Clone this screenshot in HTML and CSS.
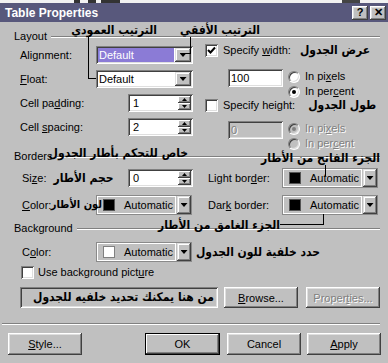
FILE: index.html
```html
<!DOCTYPE html>
<html>
<head>
<meta charset="utf-8">
<title>Table Properties</title>
<link rel="stylesheet" href="styles.css">
</head>
<body>
<div class="win">
  <div class="topstrip"></div>
  <div class="titlebar">
    <span class="title">Table Properties</span>
    <div class="tbtns"><span class="tbtn">?</span><span class="tbtn">✕</span></div>
  </div>

  <div class="ghead g-layout"><span>Layout</span><span class="etch"></span></div>
  <div class="layout">
    <div class="lcol">
      <div class="row"><span class="lbl w76">Alignment:</span>
        <div class="select focus"><span class="val">Default</span><span class="dd"><i class="tri"></i></span></div></div>
      <div class="row"><span class="lbl w76"><u>F</u>loat:</span>
        <div class="select"><span class="val">Default</span><span class="dd"><i class="tri"></i></span></div></div>
      <div class="row"><span class="lbl w108">Cell pa<u>d</u>ding:</span>
        <div class="spin"><span class="val">1</span><span class="sbtns"><span class="sb"><i class="up"></i></span><span class="sb"><i class="down"></i></span></span></div></div>
      <div class="row"><span class="lbl w108">Cell <u>s</u>pacing:</span>
        <div class="spin"><span class="val">2</span><span class="sbtns"><span class="sb"><i class="up"></i></span><span class="sb"><i class="down"></i></span></span></div></div>
    </div>
    <div class="rcol">
      <div class="chkrow"><span class="chk"><svg width="9" height="9" viewBox="0 0 9 9"><path d="M1 4 L3.5 6.5 L8 1.5" fill="none" stroke="#000" stroke-width="2"/></svg></span><span>Specify <u>w</u>idth:</span><span class="ar sw" dir="rtl">عرض الجدول</span></div>
      <div class="optrow r2">
        <div class="field">100</div>
        <div class="radios">
          <div class="radio-row"><span class="radio"></span><span>In pi<u>x</u>els</span></div>
          <div class="radio-row"><span class="radio on"></span><span>In per<u>c</u>ent</span></div>
        </div>
      </div>
      <div class="chkrow"><span class="chk"></span><span>Specify height:</span><span class="ar sh" dir="rtl">طول الجدول</span></div>
      <div class="optrow r4">
        <div class="field dis">0</div>
        <div class="radios dis">
          <div class="radio-row"><span class="radio on"></span><span class="dtext">In pi<u>x</u>els</span></div>
          <div class="radio-row"><span class="radio"></span><span class="dtext">In per<u>c</u>ent</span></div>
        </div>
      </div>
    </div>
  </div>

  <div class="ghead"><span>Borders</span><span class="etch"></span></div>
  <div class="borders">
    <div class="bl">
      <div class="row r20"><span class="lbl w106">Si<u>z</u>e: <span class="ar sz" dir="rtl">حجم الأطار</span></span>
        <div class="spin"><span class="val">0</span><span class="sbtns"><span class="sb"><i class="up"></i></span><span class="sb"><i class="down"></i></span></span></div></div>
      <div class="row r20"><span class="lbl w74"><u>C</u>olor:</span>
        <div class="cpick"><span class="cmain"><span class="swatch"></span>Automatic</span><span class="cdd"><i class="tri"></i></span></div></div>
    </div>
    <div class="br">
      <div class="row r20"><span class="lbl w74">Light bor<u>d</u>er:</span>
        <div class="cpick"><span class="cmain"><span class="swatch"></span>Automatic</span><span class="cdd"><i class="tri"></i></span></div></div>
      <div class="row r20"><span class="lbl w74">Dar<u>k</u> border:</span>
        <div class="cpick"><span class="cmain"><span class="swatch"></span>Automatic</span><span class="cdd"><i class="tri"></i></span></div></div>
    </div>
  </div>

  <div class="ghead g-bg"><span>Background</span><span class="etch"></span></div>
  <div class="row r20 bgrow"><span class="lbl w74">C<u>o</u>lor:</span>
    <div class="cpick"><span class="cmain"><span class="swatch white"></span>Automatic</span><span class="cdd"><i class="tri"></i></span></div>
    <span class="ar bgc" dir="rtl">حدد خلفية للون الجدول</span></div>
  <div class="chkrow usebg"><span class="chk"></span><span>Use background pict<u>u</u>re</span></div>
  <div class="inrow">
    <div class="field wide"><span class="ar" dir="rtl">من هنا يمكنك تحديد خلفيه للجدول</span></div>
    <span class="btn browse"><u>B</u>rowse...</span>
    <span class="btn props dtext">Proper<u>t</u>ies...</span>
  </div>

  <div class="sep"></div>
  <div class="btnrow">
    <span class="btn"><u>S</u>tyle...</span>
    <span class="btn ok">OK</span>
    <span class="btn cancel">Cancel</span>
    <span class="btn apply"><u>A</u>pply</span>
  </div>

  <span class="ar abs a1" dir="rtl">الترتيب العمودي</span>
  <span class="ar abs a2" dir="rtl">الترتيب الأفقي</span>
  <span class="ar abs a5" dir="rtl">خاص للتحكم بأطار الجدول</span>
  <span class="ar abs a6" dir="rtl">الجزء الفاتح من الأطار</span>
  <span class="ar abs a8" dir="rtl">لون الأطار</span>
  <span class="ar abs a9" dir="rtl">الجزء الغامق من الأطار</span>
  <span class="ln l1"></span>
  <span class="ln l2"></span>
  <span class="ln l3"></span>
  <span class="ln l4"></span>
</div>
</body>
</html>
```

FILE: styles.css
```css
* { box-sizing: border-box; }
html, body { margin: 0; padding: 0; }
body {
  background: #c0c0c0;
  font: 11px "Liberation Sans", Arial, sans-serif;
  color: #000;
}
.win {
  position: relative;
  width: 388px;
  height: 363px;
  background: #c0c0c0;
  overflow: hidden;
}
.topstrip {
  height: 3px;
  background: linear-gradient(90deg, #f2f2f2 0 74px, #333 74px 80px, #f2f2f2 80px 88px, #333 88px 96px, #f2f2f2 96px 101px, #333 101px 120px, #f2f2f2 120px 342px, #444 342px 360px, #f2f2f2 360px);
}
.titlebar {
  height: 19px;
  background: #58587c;
  display: flex;
  align-items: center;
  justify-content: space-between;
  padding: 0 2px 0 5px;
}
.title { color: #fff; font-weight: bold; font-size: 12px; }
.tbtns { display: flex; gap: 2px; }
.tbtn {
  width: 16px; height: 14px;
  background: #c0c0c0;
  box-shadow: inset -1px -1px #404040, inset 1px 1px #fff, inset -2px -2px #808080, inset 2px 2px #dfdfdf;
  font: bold 11px "Liberation Sans", Arial, sans-serif;
  display: flex; align-items: center; justify-content: center;
  line-height: 1;
  padding-bottom: 1px;
}

/* group headers */
.ghead {
  display: flex;
  align-items: center;
  height: 13px;
  padding: 0 8px 0 14px;
  line-height: 13px;
}
.g-layout { margin-top: 8px; }
.etch {
  flex: 1;
  height: 2px;
  border-top: 1px solid #808080;
  border-bottom: 1px solid #fff;
  margin-left: 4px;
}

.row { display: flex; align-items: center; height: 18px; }
.r20 { height: 20px; }
.lbl { line-height: 18px; white-space: nowrap; flex: none; }
.w74 { width: 74px; }
.w76 { width: 76px; }
.w106 { width: 106px; }
.w108 { width: 108px; }

/* layout section */
.layout { display: flex; height: 107px; }
.lcol {
  display: flex; flex-direction: column; gap: 6px;
  padding: 3px 0 0 20px;
  width: 205px;
}
.rcol { display: flex; flex-direction: column; padding-top: 1px; }

.select {
  width: 97px; height: 18px;
  background: #fff;
  padding: 2px;
  display: flex;
  box-shadow: inset 1px 1px #808080, inset -1px -1px #fff, inset 2px 2px #404040, inset -2px -2px #dfdfdf;
}
.select .val { flex: 1; line-height: 14px; padding-left: 1px; margin-right: 1px; }
.select.focus .val { background: #8b7bd6; color: #fff; }
.dd, .cdd {
  width: 16px;
  background: #c0c0c0;
  box-shadow: inset -1px -1px #404040, inset 1px 1px #dfdfdf, inset -2px -2px #808080, inset 2px 2px #fff;
  display: flex; align-items: center; justify-content: center;
}
.tri {
  display: block;
  width: 7px; height: 4px;
  background: #000;
  clip-path: polygon(0 0, 100% 0, 50% 100%);
}

.spin {
  width: 65px; height: 18px;
  background: #fff;
  padding: 2px;
  display: flex;
  box-shadow: inset 1px 1px #808080, inset -1px -1px #fff, inset 2px 2px #404040, inset -2px -2px #dfdfdf;
}
.spin .val { flex: 1; line-height: 14px; padding-left: 3px; }
.sbtns { width: 13px; display: flex; flex-direction: column; }
.sb {
  flex: 1;
  background: #c0c0c0;
  box-shadow: inset -1px -1px #404040, inset 1px 1px #fff, inset -2px -2px #808080;
  display: flex; align-items: center; justify-content: center;
}
.up, .down { display: block; width: 5px; height: 3px; background: #000; }
.up { clip-path: polygon(50% 0, 100% 100%, 0 100%); }
.down { clip-path: polygon(0 0, 100% 0, 50% 100%); }

.chkrow { display: flex; align-items: center; height: 13px; gap: 5px; line-height: 13px; white-space: nowrap; }
.chk {
  width: 13px; height: 13px; flex: none;
  background: #fff;
  box-shadow: inset 1px 1px #808080, inset -1px -1px #fff, inset 2px 2px #404040, inset -2px -2px #dfdfdf;
  display: flex; align-items: center; justify-content: center;
}
.optrow { display: flex; margin-left: 23px; }
.r2 { margin-top: 12px; height: 30px; }
.r4 { margin-top: 9px; height: 30px; }
.field {
  width: 55px; height: 18px;
  background: #fff;
  padding: 2px 3px;
  line-height: 14px;
  box-shadow: inset 1px 1px #808080, inset -1px -1px #fff, inset 2px 2px #404040, inset -2px -2px #dfdfdf;
}
.field.dis { background: #c0c0c0; color: #808080; text-shadow: 1px 1px #fff; }
.radios { margin-left: 5px; display: flex; flex-direction: column; }
.radio-row { display: flex; align-items: center; gap: 5px; height: 15px; line-height: 13px; white-space: nowrap; }
.radio {
  width: 12px; height: 12px; flex: none;
  border-radius: 50%;
  background: #fff;
  border: 1px solid;
  border-color: #808080 #fff #fff #808080;
  box-shadow: inset 1px 1px #404040, inset -1px -1px #dfdfdf;
  display: flex; align-items: center; justify-content: center;
}
.radio.on::after {
  content: "";
  width: 4px; height: 4px;
  border-radius: 50%;
  background: #000;
}
.radios.dis .radio { background: #c0c0c0; }
.radios.dis .radio.on::after { background: #808080; }
.dtext { color: #808080; text-shadow: 1px 1px #fff; }

/* borders section */
.borders { display: flex; height: 59px; padding-top: 5px; }
.bl { padding-left: 22px; width: 208px; display: flex; flex-direction: column; gap: 7px; }
.br { display: flex; flex-direction: column; gap: 7px; }
.cpick {
  width: 96px; height: 20px;
  display: flex;
  background: #c0c0c0;
  border: 1px solid #8a8a8a;
}
.cmain {
  flex: 1;
  border: 1px solid #fff;
  display: flex; align-items: center;
  padding-left: 5px;
  white-space: nowrap;
}
.swatch {
  width: 12px; height: 12px;
  background: #000;
  border: 1px solid #555;
  margin-right: 9px;
  flex: none;
}
.swatch.white { background: #fff; border-color: #808080; }
.cdd { width: 14px; margin-left: 1px; }

/* background section */
.bgrow { margin: 7px 0 0 22px; }
.usebg { margin: 4px 0 0 21px; gap: 4px; }
.inrow { display: flex; margin: 8px 0 0 20px; height: 21px; }
.field.wide {
  width: 198px; height: 21px;
  background: #c0c0c0;
  text-align: right;
  padding: 2px 4px;
  line-height: 16px;
  overflow: hidden;
  box-shadow: inset 1px 1px #808080, inset -1px -1px #fff, inset 2px 2px #404040, inset -2px -2px #dfdfdf;
}
.btn {
  width: 74px; height: 22px;
  background: #c0c0c0;
  box-shadow: inset -1px -1px #404040, inset 1px 1px #fff, inset -2px -2px #808080, inset 2px 2px #dfdfdf;
  display: flex; align-items: center; justify-content: center;
  white-space: nowrap;
}
.inrow .btn { height: 21px; }
.browse { margin-left: 6px; }
.props { margin-left: 8px; }
.sep {
  margin: 15px 0 0 2px;
  width: 378px; height: 2px;
  border-top: 1px solid #808080;
  border-bottom: 1px solid #fff;
}
.btnrow { display: flex; margin: 8px 0 0 8px; }
.ok {
  margin-left: 63px; width: 75px;
  box-shadow: inset 0 0 0 1px #000, inset -2px -2px #404040, inset 2px 2px #fff, inset -3px -3px #808080;
}
.cancel { margin-left: 7px; }
.apply { margin-left: 6px; }

/* arabic annotations */
.ar {
  font-family: "DejaVu Sans Condensed", "DejaVu Sans", sans-serif;
  font-weight: bold;
  font-size: 12px;
  font-stretch: condensed;
  line-height: 13px;
  color: #000;
  white-space: nowrap;
}
.sw { margin-left: 4px; }
.sh { margin-left: 8px; }
.sz { margin-left: 4px; }
.bgc { margin-left: 4px; }
.abs { position: absolute; }
.a1 { right: 231px; top: 24px; }
.a2 { right: 128px; top: 24px; }
.a5 { right: 200px; top: 147px; }
.a6 { right: 8px; top: 152px; }
.a8 { right: 286px; top: 198px; font-size: 11px; }
.a9 { right: 108px; top: 219px; }

.ln { position: absolute; border: 0 solid #000; }
.l1 { left: 88px; top: 37px; width: 8px; height: 42px; border-left-width: 1px; border-bottom-width: 1px; }
.l2 { left: 182px; top: 37px; width: 9px; height: 17px; border-right-width: 1px; border-bottom-width: 1px; }
.l3 { left: 325px; top: 165px; width: 1px; height: 11px; border-left-width: 1px; }
.l4 { left: 280px; top: 214px; width: 44px; height: 11px; border-right-width: 1px; border-bottom-width: 1px; }
```
